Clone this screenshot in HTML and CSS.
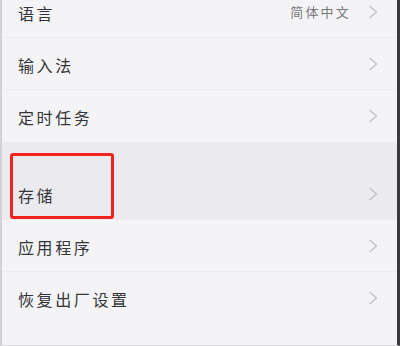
FILE: index.html
```html
<!DOCTYPE html>
<html lang="zh-CN">
<head>
<meta charset="utf-8">
<link rel="stylesheet" href="styles.css">
</head>
<body>
<div class="screen">
  <div class="group first">
    <div class="row">
      <span class="label">语言</span>
      <span class="value">简体中文</span>
      <svg class="chev" viewBox="0 0 10 14" width="10" height="14"><polyline points="1.5,1 8.5,7 1.5,13"/></svg>
    </div>
    <div class="row">
      <span class="label">输入法</span>
      <svg class="chev" viewBox="0 0 10 14" width="10" height="14"><polyline points="1.5,1 8.5,7 1.5,13"/></svg>
    </div>
    <div class="row last">
      <span class="label">定时任务</span>
      <svg class="chev" viewBox="0 0 10 14" width="10" height="14"><polyline points="1.5,1 8.5,7 1.5,13"/></svg>
    </div>
  </div>
  <div class="gap"></div>
  <div class="group">
    <div class="row pressed">
      <span class="label">存储</span>
      <svg class="chev" viewBox="0 0 10 14" width="10" height="14"><polyline points="1.5,1 8.5,7 1.5,13"/></svg>
      <div class="highlight"></div>
    </div>
    <div class="row">
      <span class="label">应用程序</span>
      <svg class="chev" viewBox="0 0 10 14" width="10" height="14"><polyline points="1.5,1 8.5,7 1.5,13"/></svg>
    </div>
    <div class="row last">
      <span class="label">恢复出厂设置</span>
      <svg class="chev" viewBox="0 0 10 14" width="10" height="14"><polyline points="1.5,1 8.5,7 1.5,13"/></svg>
    </div>
  </div>
  <div class="tail"></div>
</div>
</body>
</html>
```

FILE: styles.css
```css
html, body {
  margin: 0;
  padding: 0;
  background: #f4f4f7;
}
body {
  font-family: "Noto Sans CJK SC", "Noto Sans", sans-serif;
  overflow: hidden;
}
.screen {
  width: 400px;
  height: 346px;
  box-sizing: border-box;
  border-left: 2px solid #d2d2d5;
  border-right: 3px solid #3a3a3c;
  border-bottom: 1px solid #dcdcde;
  background: #f4f4f7;
  display: flex;
  flex-direction: column;
  overflow: hidden;
}
.group.first {
  margin-top: -14px;
}
.row {
  position: relative;
  height: 52px;
  flex: none;
  display: flex;
  align-items: center;
  padding: 0 19px 0 16px;
  box-sizing: border-box;
  border-bottom: 1px solid #ececf0;
  background: #f4f4f7;
}
.row.last {
  border-bottom: none;
}
.row.pressed {
  background: #ebebef;
}
.label {
  flex: 1;
  font-size: 16px;
  letter-spacing: 2.6px;
  color: #353537;
  padding-top: 2px;
}
.value {
  font-size: 13px;
  letter-spacing: 2.2px;
  color: #77777a;
  margin-right: 17px;
}
.chev {
  flex: none;
  fill: none;
  stroke: #c2c2c6;
  stroke-width: 1.4;
}
.gap {
  height: 26px;
  flex: none;
  background: #ebebef;
}
.tail {
  flex: 1;
  background: #f4f4f7;
}
.highlight {
  position: absolute;
  left: 8px;
  top: -15px;
  width: 104px;
  height: 66px;
  box-sizing: border-box;
  border: 3px solid #f2231f;
  border-radius: 3px;
}
```
